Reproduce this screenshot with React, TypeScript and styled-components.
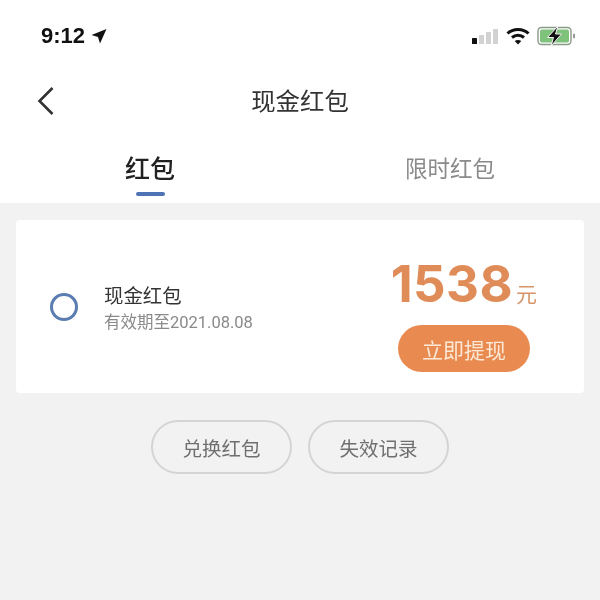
import React from 'react';
import styled, { createGlobalStyle } from 'styled-components';

const GlobalStyle = createGlobalStyle`
  html, body {
    margin: 0;
    padding: 0;
    background: #f2f2f2;
  }
  * {
    box-sizing: border-box;
  }
`;

export default function App() {
  return (
    <Page>
      <GlobalStyle />
      <Header>
        <StatusBar>
          <TimeGroup>
            <Time>9:12</Time>
            <svg width="16" height="16" viewBox="0 0 16 16">
              <path d="M15.5 1 L0.5 7 L7 9 L9 15.5 Z" fill="#111" />
            </svg>
          </TimeGroup>
          <StatusIcons>
            <svg width="28" height="17" viewBox="0 0 28 17">
              <rect x="1" y="10" width="5" height="6" rx="0.5" fill="#111" />
              <rect x="8" y="7" width="5" height="9" rx="0.5" fill="#d2d2d2" />
              <rect x="15" y="4" width="5" height="12" rx="0.5" fill="#d2d2d2" />
              <rect x="22" y="1" width="5" height="15" rx="0.5" fill="#d2d2d2" />
            </svg>
            <svg width="24" height="18" viewBox="0 0 24 18">
              <path d="M1.5 6.5 C7 1 17 1 22.5 6.5" fill="none" stroke="#111" strokeWidth="3" />
              <path d="M6 10.5 C9.5 7.5 14.5 7.5 18 10.5" fill="none" stroke="#111" strokeWidth="3" />
              <path d="M12 17.5 L8.7 14 C10.5 12.5 13.5 12.5 15.3 14 Z" fill="#111" />
            </svg>
            <svg width="39" height="20" viewBox="0 0 39 20">
              <rect x="1" y="1.5" width="33" height="17" rx="3.5" fill="none" stroke="#8a9a88" strokeWidth="1.4" />
              <rect x="3" y="3.5" width="29" height="13" rx="2" fill="#7fc27c" />
              <rect x="36" y="7.5" width="2" height="5" rx="1" fill="#9a9a9a" />
              <path d="M21 0 L10.5 11.5 H16.5 L14 20 L24.5 8 H18.5 Z" fill="#111" stroke="#f4f4f4" strokeWidth="1" />
            </svg>
          </StatusIcons>
        </StatusBar>
        <NavBar>
          <BackButton>
            <svg width="18" height="30" viewBox="0 0 18 30">
              <path d="M15.5 2 L2.5 15 L15.5 28" fill="none" stroke="#333" strokeWidth="2.6" />
            </svg>
          </BackButton>
          <NavTitle>现金红包</NavTitle>
        </NavBar>
        <Tabs>
          <Tab $active>
            红包
            <TabMarker />
          </Tab>
          <Tab>限时红包</Tab>
        </Tabs>
      </Header>

      <Card>
        <Radio />
        <CardInfo>
          <CardTitle>现金红包</CardTitle>
          <CardDate>有效期至2021.08.08</CardDate>
        </CardInfo>
        <CardAside>
          <Amount>
            1538<Unit>元</Unit>
          </Amount>
          <WithdrawButton>立即提现</WithdrawButton>
        </CardAside>
      </Card>

      <Actions>
        <OutlineButton>兑换红包</OutlineButton>
        <OutlineButton>失效记录</OutlineButton>
      </Actions>
    </Page>
  );
}

const cjk = `"Noto Sans CJK SC", "Liberation Sans", sans-serif`;

const Page = styled.div`
  width: 600px;
  height: 600px;
  overflow: hidden;
  background: #f2f2f2;
  font-family: ${cjk};
  filter: blur(0.4px);
`;

const Header = styled.header`
  height: 203px;
  background: #fff;
`;

const StatusBar = styled.div`
  height: 72px;
  padding: 0 24px 0 41px;
  display: flex;
  align-items: center;
  justify-content: space-between;
`;

const TimeGroup = styled.div`
  display: flex;
  align-items: center;
  gap: 6px;
`;

const Time = styled.span`
  font-family: 'Liberation Sans', sans-serif;
  font-size: 22px;
  font-weight: 700;
  color: #111;
`;

const StatusIcons = styled.div`
  display: flex;
  align-items: center;
  gap: 7px;
`;

const NavBar = styled.div`
  position: relative;
  height: 58px;
  padding-bottom: 4px;
  display: flex;
  align-items: center;
  justify-content: center;
`;

const BackButton = styled.div`
  position: absolute;
  left: 37px;
  top: 14px;
  line-height: 0;
`;

const NavTitle = styled.h1`
  margin: 0;
  font-size: 24.4px;
  font-weight: 400;
  color: #333;
`;

const Tabs = styled.div`
  display: grid;
  grid-template-columns: 300px 300px;
  padding-top: 14px;
`;

const Tab = styled.div<{ $active?: boolean }>`
  position: relative;
  text-align: center;
  line-height: 46px;
  font-size: ${(p) => (p.$active ? '25px' : '22.5px')};
  font-weight: ${(p) => (p.$active ? 500 : 400)};
  color: ${(p) => (p.$active ? '#222' : '#8a8a8a')};
`;

const TabMarker = styled.span`
  position: absolute;
  left: 136px;
  top: 48px;
  width: 29px;
  height: 4px;
  border-radius: 2px;
  background: #4f74b5;
`;

const Card = styled.section`
  margin: 17px 16px 0;
  height: 173px;
  padding: 0 47px 0 34px;
  display: flex;
  align-items: center;
  background: #fff;
  border-radius: 4px;
`;

const Radio = styled.span`
  width: 28px;
  height: 28px;
  margin-right: 26px;
  border: 3px solid #5a7cb0;
  border-radius: 50%;
  flex: none;
`;

const CardInfo = styled.div`
  flex: 1;
  padding-top: 2px;
  display: flex;
  flex-direction: column;
  gap: 2px;
`;

const CardTitle = styled.div`
  font-size: 19.4px;
  line-height: 28px;
  color: #333;
`;

const CardDate = styled.div`
  font-family: Roboto, ${cjk};
  font-size: 16.5px;
  line-height: 24px;
  color: #8a8a8a;
`;

const CardAside = styled.div`
  align-self: flex-start;
  padding-top: 39px;
  display: flex;
  flex-direction: column;
  align-items: flex-end;
  gap: 16px;
`;

const Amount = styled.div`
  height: 50px;
  font-family: Inter, 'Liberation Sans', sans-serif;
  font-size: 51px;
  font-weight: 700;
  line-height: 50px;
  letter-spacing: 0.4px;
  color: #e08c59;
`;

const Unit = styled.span`
  margin-left: 3px;
  font-family: ${cjk};
  font-size: 21px;
  font-weight: 400;
  line-height: 1;
  letter-spacing: 0;
  color: #d5946a;
`;

const WithdrawButton = styled.button`
  width: 132px;
  height: 47px;
  margin-right: 7px;
  padding: 0;
  border: none;
  border-radius: 24px;
  background: #e98b50;
  color: #fbe9d6;
  font-family: ${cjk};
  font-size: 21px;
`;

const Actions = styled.div`
  margin-top: 27px;
  display: flex;
  justify-content: center;
  gap: 16px;
`;

const OutlineButton = styled.button`
  width: 141px;
  height: 54px;
  padding: 0;
  border: 2px solid #d4d4d4;
  border-radius: 27px;
  background: transparent;
  color: #6f6f6f;
  font-family: ${cjk};
  font-size: 19.5px;
`;
